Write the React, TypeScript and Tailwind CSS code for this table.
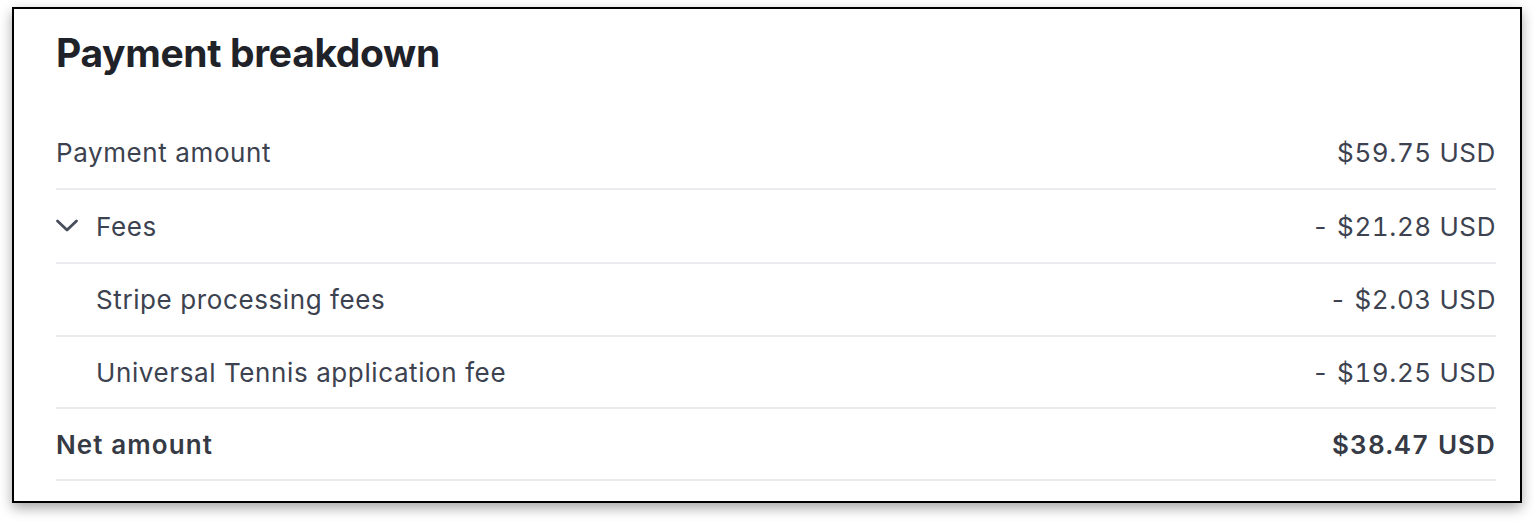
import React from "react";

function Chevron() {
  return (
    <svg width="24" height="24" viewBox="0 0 24 24" fill="none" className="mr-[17px] ml-[-1px]">
      <path d="M2.5 7 L12 16 L21.5 7" stroke="#474d5b" strokeWidth="2.8" strokeLinecap="round" strokeLinejoin="round" />
    </svg>
  );
}

function Row({ children, value, bold, h }: { children: React.ReactNode; value: string; bold?: boolean; h: string }) {
  return (
    <div className={`flex ${h} items-center justify-between border-b-2 border-[#ebebef] ${bold ? "font-semibold text-[#353a45] tracking-[1.1px]" : "text-[#3c4250]"}`}>
      <div className="flex items-center">{children}</div>
      <div className="tabular-nums">{value}</div>
    </div>
  );
}

export default function App() {
  return (
    <div className="w-[1534px] h-[522px] bg-white pl-[12px] pt-[7px]" style={{ fontFamily: "Inter, 'Noto Sans', sans-serif" }}>
      <div className="w-[1510px] h-[496px] border-2 border-black bg-white shadow-[0_5px_12px_rgba(0,0,0,0.35)] pl-[42px] pr-[24px]">
        <h1 className="text-[39px] leading-[48px] font-bold text-[#1f2329] mt-[20px] mb-[39px] tracking-[-0.35px]">Payment breakdown</h1>
        <div className="text-[26px] tracking-[0.6px]">
          <Row h="h-[74px]" value="$59.75 USD">Payment amount</Row>
          <Row h="h-[74px]" value="- $21.28 USD"><Chevron />Fees</Row>
          <Row h="h-[73px]" value="- $2.03 USD"><span className="pl-[40px]">Stripe processing fees</span></Row>
          <Row h="h-[72px]" value="- $19.25 USD"><span className="pl-[40px]">Universal Tennis application fee</span></Row>
          <Row h="h-[72px]" value="$38.47 USD" bold>Net amount</Row>
        </div>
      </div>
    </div>
  );
}
